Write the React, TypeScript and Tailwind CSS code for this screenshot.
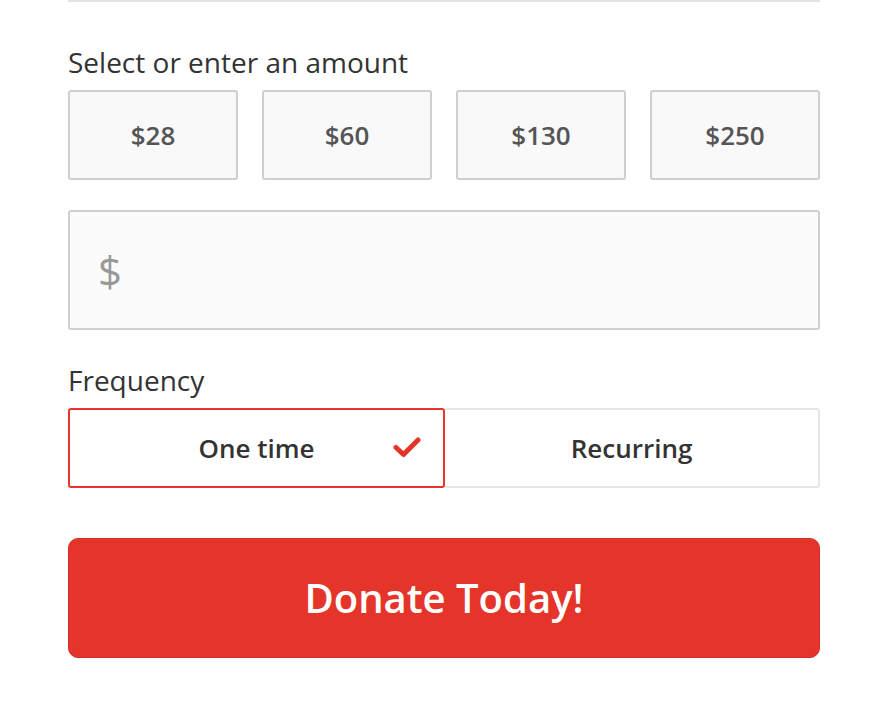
const amounts = ["$28", "$60", "$130", "$250"];

const CheckIcon = () => (
  <svg width="28" height="22" viewBox="0 0 28 22" fill="none">
    <path d="M3 11.5 L10.5 18.5 L25 4" stroke="#e5352a" strokeWidth="5" strokeLinecap="round" strokeLinejoin="round" />
  </svg>
);

const App = () => {
  return (
    <div className="min-h-[708px] bg-white px-[68px] font-['Open_Sans',sans-serif]">
      <div className="h-[2px] bg-[#e2e2e2]" />
      <p className="mt-[42px] text-[28px] leading-[36px] text-[#333]">Select or enter an amount</p>
      <div className="mt-[10px] grid grid-cols-4 gap-[24px]">
        {amounts.map((a) => (
          <button
            key={a}
            className="h-[90px] rounded-[3px] border-2 border-[#cfcfcf] bg-[#f9f9f9] text-[26px] font-semibold text-[#555]"
          >
            {a}
          </button>
        ))}
      </div>
      <div className="mt-[30px] flex h-[120px] items-center rounded-[3px] border-2 border-[#cfcfcf] bg-[#fbfbfb] px-[28px]">
        <span className="text-[42px] text-[#999]">$</span>
      </div>
      <p className="mt-[32px] text-[28px] leading-[36px] text-[#333]">Frequency</p>
      <div className="mt-[10px] flex h-[80px]">
        <div className="relative flex flex-1 items-center justify-center rounded-[3px] border-2 border-[#e5352a]">
          <span className="text-[26px] font-semibold text-[#333]">One time</span>
          <div className="absolute right-[22px] top-[26px]">
            <CheckIcon />
          </div>
        </div>
        <div className="flex flex-1 items-center justify-center rounded-r-[3px] border-2 border-l-0 border-[#e6e6e6]">
          <span className="text-[26px] font-semibold text-[#333]">Recurring</span>
        </div>
      </div>
      <button className="mt-[50px] flex h-[120px] w-full items-center justify-center rounded-[10px] border border-[#d4302a] bg-[#e5352a] text-[40px] font-semibold text-white">
        Donate Today!
      </button>
    </div>
  );
};

export default App;
